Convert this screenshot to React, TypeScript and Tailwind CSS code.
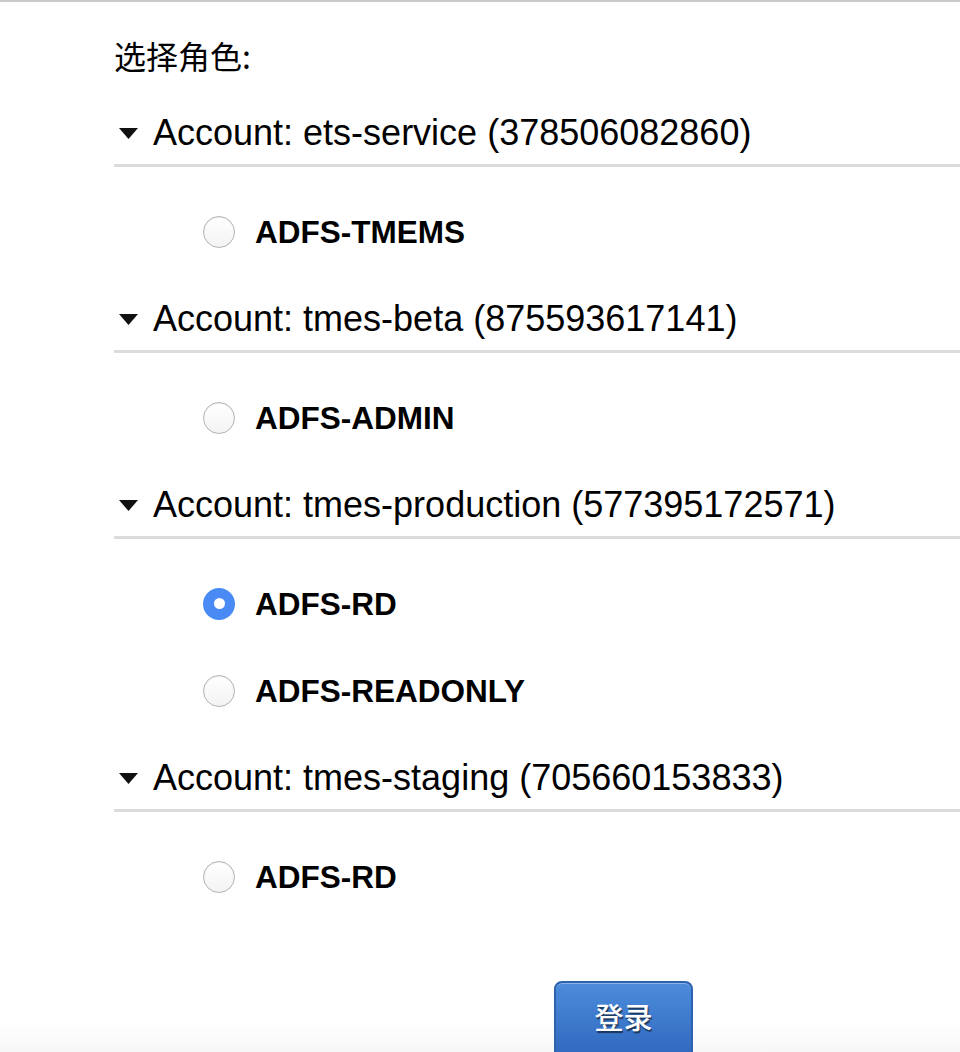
import { useState } from "react";

type Account = {
  name: string;
  id: string;
  roles: string[];
};

const accounts: Account[] = [
  { name: "ets-service", id: "378506082860", roles: ["ADFS-TMEMS"] },
  { name: "tmes-beta", id: "875593617141", roles: ["ADFS-ADMIN"] },
  { name: "tmes-production", id: "577395172571", roles: ["ADFS-RD", "ADFS-READONLY"] },
  { name: "tmes-staging", id: "705660153833", roles: ["ADFS-RD"] },
];

function Radio({ checked }: { checked: boolean }) {
  if (checked) {
    return (
      <span className="flex h-[32px] w-[32px] shrink-0 items-center justify-center rounded-full bg-[#4a8af4]">
        <span className="h-[11px] w-[11px] rounded-full bg-white" />
      </span>
    );
  }
  return (
    <span className="block h-[32px] w-[32px] shrink-0 rounded-full border-[1.5px] border-[#b3b3b3] bg-[linear-gradient(#ffffff,#f3f3f3)] shadow-[inset_0_1px_1px_rgba(0,0,0,0.06)]" />
  );
}

export default function App() {
  const [selected, setSelected] = useState("tmes-production/ADFS-RD");

  return (
    <div
      className="min-h-[1052px] border-t-2 border-[#c9c9c9] bg-[linear-gradient(to_bottom,#ffffff_0px,#ffffff_1018px,#f7f7f7_1052px)] pl-[114px] text-black"
      style={{ fontFamily: '"Liberation Sans", Arial, "Noto Sans CJK SC", sans-serif' }}
    >
      <div className="pt-[33px] text-[32px] leading-[40px]" style={{ fontFamily: '"Noto Sans CJK SC", sans-serif' }}>
        选择角色:
      </div>

      <div className="mt-[37px]">
        {accounts.map((acc) => (
          <div key={acc.id}>
            <div className="flex h-[42px] items-center pl-[5px] text-[36px] leading-[42px]">
              <svg width="19" height="11" viewBox="0 0 19 11" className="mr-[15px] shrink-0">
                <path d="M0 0 H19 L9.5 11 Z" fill="#111" />
              </svg>
              <span>
                Account: {acc.name} ({acc.id})
              </span>
            </div>
            <div className="mt-[10px] h-[3px] bg-[#dcdcdc]" />
            <div className="pb-[23px] pt-[21px]">
              {acc.roles.map((role) => {
                const key = acc.name + "/" + role;
                return (
                  <label
                    key={role}
                    className="flex h-[87px] cursor-pointer items-center gap-[20px] pl-[89px]"
                    onClick={() => setSelected(key)}
                  >
                    <Radio checked={selected === key} />
                    <span className="text-[31.5px] font-bold leading-[38px]">{role}</span>
                  </label>
                );
              })}
            </div>
          </div>
        ))}
      </div>

      <div className="ml-[440px] mt-[38px]">
        <button
          className="flex h-[80px] w-[139px] items-start justify-center rounded-[8px] border-2 border-[#2d62b0] bg-[linear-gradient(#4c8cdb,#2f66bd)] pt-[13px] text-[29px] font-medium leading-[40px] text-white shadow-[inset_0_1px_0_rgba(255,255,255,0.35)] [text-shadow:1px_2px_1px_rgba(0,0,0,0.55)]"
          style={{ fontFamily: '"Noto Sans CJK SC", sans-serif' }}
        >
          登录
        </button>
      </div>
    </div>
  );
}
